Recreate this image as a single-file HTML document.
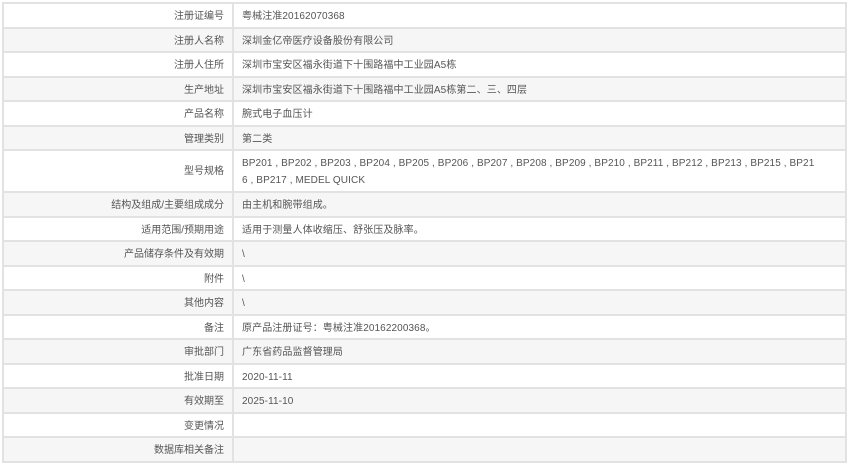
<!DOCTYPE html>
<html><head><meta charset="utf-8"><style>
html,body{margin:0;padding:0;background:#fff;}
body{width:850px;height:464px;overflow:hidden;font-family:"Liberation Sans","Noto Sans CJK SC",sans-serif;font-size:10px;color:#555;}
.t{position:absolute;left:2px;top:2px;width:841px;border:2px solid #e2e2e2;border-bottom:none;}
.r{display:flex;height:22.5px;border-bottom:2px solid #e2e2e2;overflow:hidden;}
.r:nth-child(even){background:#f6f6f6;}
.r.big{height:40px;}
.l{width:220px;flex:none;text-align:right;padding-right:8px;border-right:2px solid #e2e2e2;line-height:25px;white-space:nowrap;}
.big .l{line-height:42px;}
.v{flex:1;padding:0 12px 0 8px;line-height:25px;white-space:nowrap;letter-spacing:0.1px;}
.big .v{line-height:17px;padding-top:4px;}
</style></head><body>
<div class="t">
<div class="r"><div class="l">注册证编号</div><div class="v">粤械注准20162070368</div></div>
<div class="r"><div class="l">注册人名称</div><div class="v">深圳金亿帝医疗设备股份有限公司</div></div>
<div class="r"><div class="l">注册人住所</div><div class="v">深圳市宝安区福永街道下十围路福中工业园A5栋</div></div>
<div class="r"><div class="l">生产地址</div><div class="v">深圳市宝安区福永街道下十围路福中工业园A5栋第二、三、四层</div></div>
<div class="r"><div class="l">产品名称</div><div class="v">腕式电子血压计</div></div>
<div class="r"><div class="l">管理类别</div><div class="v">第二类</div></div>
<div class="r big"><div class="l">型号规格</div><div class="v">BP201&nbsp;,&nbsp;BP202&nbsp;,&nbsp;BP203&nbsp;,&nbsp;BP204&nbsp;,&nbsp;BP205&nbsp;,&nbsp;BP206&nbsp;,&nbsp;BP207&nbsp;,&nbsp;BP208&nbsp;,&nbsp;BP209&nbsp;,&nbsp;BP210&nbsp;,&nbsp;BP211&nbsp;,&nbsp;BP212&nbsp;,&nbsp;BP213&nbsp;,&nbsp;BP215&nbsp;,&nbsp;BP21<br>6&nbsp;,&nbsp;BP217&nbsp;,&nbsp;MEDEL QUICK</div></div>
<div class="r"><div class="l">结构及组成/主要组成成分</div><div class="v">由主机和腕带组成。</div></div>
<div class="r"><div class="l">适用范围/预期用途</div><div class="v">适用于测量人体收缩压、舒张压及脉率。</div></div>
<div class="r"><div class="l">产品储存条件及有效期</div><div class="v">\</div></div>
<div class="r"><div class="l">附件</div><div class="v">\</div></div>
<div class="r"><div class="l">其他内容</div><div class="v">\</div></div>
<div class="r"><div class="l">备注</div><div class="v">原产品注册证号：粤械注准20162200368。</div></div>
<div class="r"><div class="l">审批部门</div><div class="v">广东省药品监督管理局</div></div>
<div class="r"><div class="l">批准日期</div><div class="v">2020-11-11</div></div>
<div class="r"><div class="l">有效期至</div><div class="v">2025-11-10</div></div>
<div class="r"><div class="l">变更情况</div><div class="v"></div></div>
<div class="r"><div class="l">数据库相关备注</div><div class="v"></div></div>
</div>
</body></html>
